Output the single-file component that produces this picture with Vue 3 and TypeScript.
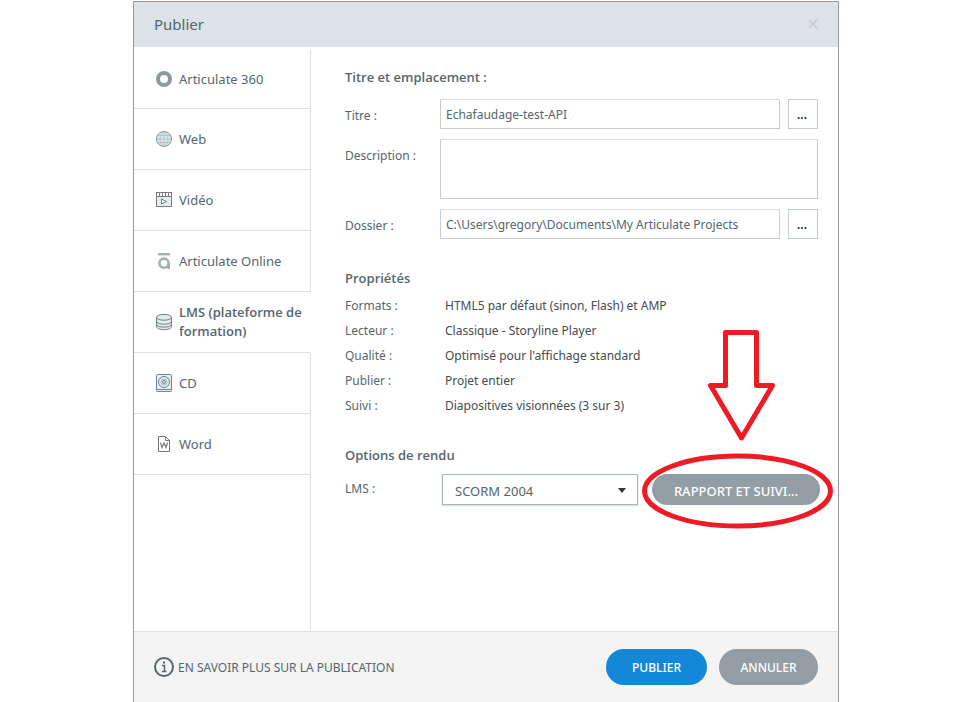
<script setup lang="ts">
import { ref } from 'vue'

interface Target {
  id: string
  label: string
}

interface Property {
  name: string
  value: string
}

const targets: Target[] = [
  { id: 'a360', label: 'Articulate 360' },
  { id: 'web', label: 'Web' },
  { id: 'video', label: 'Vidéo' },
  { id: 'online', label: 'Articulate Online' },
  { id: 'lms', label: 'LMS (plateforme de formation)' },
  { id: 'cd', label: 'CD' },
  { id: 'word', label: 'Word' },
]

const properties: Property[] = [
  { name: 'Formats :', value: 'HTML5 par défaut (sinon, Flash) et AMP' },
  { name: 'Lecteur :', value: 'Classique - Storyline Player' },
  { name: 'Qualité :', value: "Optimisé pour l'affichage standard" },
  { name: 'Publier :', value: 'Projet entier' },
  { name: 'Suivi :', value: 'Diapositives visionnées (3 sur 3)' },
]

const active = ref('lms')
const title = ref('Echafaudage-test-API')
const description = ref('')
const folder = ref('C:\\Users\\gregory\\Documents\\My Articulate Projects')
const lms = ref('SCORM 2004')
</script>

<template>
  <main class="page">
    <section class="dialog">
      <header class="head">
        <h1>Publier</h1>
        <button class="close" type="button" aria-label="Fermer">
          <svg width="10" height="10" viewBox="0 0 10 10"><path d="M1 1L9 9M9 1L1 9" stroke="#cfcfcf" stroke-width="2" /></svg>
        </button>
      </header>

      <div class="body">
        <nav class="nav">
          <button
            v-for="t in targets"
            :key="t.id"
            type="button"
            class="item"
            :class="{ active: active === t.id }"
            @click="active = t.id"
          >
            <svg class="icon" width="18" height="18" viewBox="0 0 18 18" fill="none">
              <circle v-if="t.id === 'a360'" cx="9" cy="9" r="6" stroke="#8d9a9c" stroke-width="4" />
              <g v-else-if="t.id === 'web'">
                <circle cx="9" cy="9" r="7.5" fill="#dfe8ec" stroke="#889396" />
                <path d="M9 2V16M2 9H16M3.5 5.5H14.5M3.5 12.5H14.5" stroke="#b3c3ca" />
                <ellipse cx="9" cy="9" rx="4" ry="7" stroke="#b3c3ca" />
              </g>
              <g v-else-if="t.id === 'video'">
                <rect x="1.5" y="1.5" width="15" height="14" fill="#e2ecef" stroke="#767c7e" />
                <rect x="2" y="2" width="14" height="3" fill="#fff" />
                <path d="M2 5.5H16M4.5 2V5M7.5 2V5M10.5 2V5M13.5 2V5" stroke="#767c7e" />
                <path d="M6.5 8V13L11.5 10.5Z" fill="#fff" stroke="#767c7e" />
              </g>
              <g v-else-if="t.id === 'online'" stroke="#9fb2b0">
                <path d="M3 2.2H15" stroke-width="2.4" />
                <circle cx="9" cy="11.2" r="4.6" stroke-width="2.6" />
                <path d="M13.7 11V17" stroke-width="2.6" />
              </g>
              <g v-else-if="t.id === 'lms'" stroke="#747e81">
                <path d="M1.5 4.5V13.5C1.5 15.5 5 16.7 9 16.7S16.5 15.5 16.5 13.5V4.5" fill="#e4ebed" />
                <ellipse cx="9" cy="4.3" rx="7.5" ry="2.9" fill="#e4ebed" />
                <path d="M1.5 8.2C1.5 10 5 11.2 9 11.2S16.5 10 16.5 8.2M1.5 11.2C1.5 13 5 14.1 9 14.1S16.5 13 16.5 11.2" />
              </g>
              <g v-else-if="t.id === 'cd'" stroke="#75858a">
                <rect x="1.5" y=".5" width="15" height="17" rx="1" fill="#e4edef" />
                <path d="M2 15.5H16" />
                <circle cx="9" cy="8" r="5.5" />
                <circle cx="9" cy="8" r="3" stroke="#a9b7bb" />
                <circle cx="9" cy="8" r="1.5" />
              </g>
              <g v-else stroke="#777">
                <path d="M3.5 1.5H10.5L14.5 5.5V16.5H3.5Z" fill="#fff" />
                <path d="M10.5 1.5V5.5H14.5" />
                <path d="M5.5 7.5L7 12.5L9 8L11 12.5L12.5 7.5" stroke-width="1.2" />
              </g>
            </svg>
            <span>{{ t.label }}</span>
          </button>
          <div class="rest"></div>
        </nav>

        <div class="content">
          <h2>Titre et emplacement :</h2>
          <div class="form">
            <label for="title">Titre :</label>
            <div class="line">
              <input id="title" v-model="title" type="text" />
              <button class="browse" type="button" aria-label="Parcourir le titre">...</button>
            </div>
            <label for="description">Description :</label>
            <textarea id="description" v-model="description"></textarea>
            <label for="folder">Dossier :</label>
            <div class="line">
              <input id="folder" v-model="folder" type="text" />
              <button class="browse" type="button" aria-label="Parcourir les dossiers">...</button>
            </div>
          </div>

          <h2 class="second">Propriétés</h2>
          <dl class="props">
            <template v-for="p in properties" :key="p.name">
              <dt>{{ p.name }}</dt>
              <dd>{{ p.value }}</dd>
            </template>
          </dl>

          <h2 class="third">Options de rendu</h2>
          <div class="output">
            <label for="lms">LMS :</label>
            <div class="select">
              <select id="lms" v-model="lms">
                <option>SCORM 2004</option>
                <option>SCORM 1.2</option>
                <option>AICC</option>
              </select>
              <svg class="caret" width="10" height="6" viewBox="0 0 10 6"><path d="M1 1H9L5 6Z" fill="#333" /></svg>
            </div>
            <div class="report">
              <button class="pill small" type="button">RAPPORT ET SUIVI...</button>
              <svg class="mark" width="196" height="204" viewBox="0 0 196 204" fill="none" stroke="#ed1c24" stroke-width="5" stroke-linejoin="round">
                <path d="M85.5 4.5H116.5V57.5H132.5L101.5 110L70.5 57.5H85.5Z" />
                <ellipse cx="97.5" cy="163" rx="93" ry="35" />
              </svg>
            </div>
          </div>
        </div>
      </div>

      <footer class="foot">
        <a class="more" href="#">
          <svg width="20" height="20" viewBox="0 0 20 20" fill="none" stroke="#55666d">
            <circle cx="10" cy="10" r="9" stroke-width="2" />
            <path d="M8 8.5H10.5V14M8 14.5H12.5" stroke-width="1.5" />
            <path d="M9 5.5H11" stroke-width="2" />
          </svg>
          <span>EN SAVOIR PLUS SUR LA PUBLICATION</span>
        </a>
        <button class="pill primary" type="button">PUBLIER</button>
        <button class="pill" type="button">ANNULER</button>
      </footer>
    </section>
  </main>
</template>

<style>
body {
  background: #fff;
}
</style>

<style scoped>
* {
  box-sizing: border-box;
}
.page {
  display: flex;
  min-height: 100vh;
  padding: 1px 121px 0 133px;
  font: 12px/16px "Noto Sans", "Open Sans", sans-serif;
  color: #55666d;
}
button,
input,
textarea,
select {
  font: inherit;
  color: inherit;
  margin: 0;
}
button {
  cursor: pointer;
}
.dialog {
  flex: 1;
  display: flex;
  flex-direction: column;
  border: 1px solid #999;
  border-bottom: 0;
  background: #fff;
}
.head {
  display: flex;
  align-items: center;
  justify-content: space-between;
  height: 45px;
  padding: 0 20px 2px;
  background: #dde2e6;
}
h1 {
  margin: 0;
  font-size: 15px;
  font-weight: 400;
}
.close {
  display: flex;
  padding: 0;
  border: 0;
  background: none;
}
.body {
  flex: 1;
  display: flex;
}
.nav {
  display: flex;
  flex-direction: column;
  width: 177px;
  padding-top: 3px;
}
.item {
  display: flex;
  align-items: center;
  gap: 6px;
  height: 61px;
  padding: 0 0 0 21px;
  border: solid #dde2e6;
  border-width: 0 1px 1px 0;
  background: #fff;
  font-size: 13px;
  line-height: 19px;
  text-align: left;
}
.item:first-child {
  height: 59px;
}
.item.active {
  border-right-color: transparent;
  font-family: "Open Sans", "Noto Sans", sans-serif;
  font-weight: 600;
}
.icon {
  flex: none;
}
.rest {
  flex: 1;
  border-right: 1px solid #dde2e6;
}
.content {
  flex: 1;
  padding: 20px 20px 0 34px;
}
h2 {
  margin: 0;
  font-family: "Open Sans", "Noto Sans", sans-serif;
  font-size: 13px;
  line-height: 20px;
  font-weight: 600;
}
.form {
  display: grid;
  grid-template-columns: 95px 1fr;
  row-gap: 10px;
  margin-top: 12px;
}
.form label {
  padding-top: 9px;
}
.line {
  display: flex;
  gap: 8px;
}
input,
textarea {
  min-width: 0;
  border: 1px solid #c5ced3;
  border-top-color: #d9dee1;
  border-radius: 0;
  background: #fff;
  padding: 0 5px;
  outline: 0;
}
input {
  flex: 1;
  height: 30px;
}
textarea {
  display: block;
  width: 100%;
  height: 60px;
  resize: none;
}
.browse {
  width: 30px;
  height: 30px;
  padding: 2px 2px 0 0;
  border: 1px solid #c5ced3;
  background: #fff;
  color: #222;
  font-weight: 600;
}
.second {
  margin-top: 29px;
}
.props {
  display: grid;
  grid-template-columns: 100px 1fr;
  margin: 5px 0 0;
  line-height: 25px;
}
dd {
  margin: 0;
  color: #444c50;
}
.third {
  margin-top: 27px;
}
.output {
  display: flex;
  align-items: flex-start;
  margin: 9px -2px 0 0;
}
.output label {
  width: 97px;
  padding-top: 7px;
}
.select {
  flex: 1;
  display: grid;
  align-items: center;
  margin-right: 14px;
}
.select > * {
  grid-area: 1 / 1;
}
select {
  appearance: none;
  width: 100%;
  height: 31px;
  padding: 2px 12px 0;
  border: 1px solid #a9b5bc;
  border-radius: 0;
  background: #fff;
  box-shadow: 0 1px 2px #d5dbdf;
  font-size: 13px;
}
.caret {
  justify-self: end;
  margin-right: 11px;
  pointer-events: none;
}
.report {
  position: relative;
}
.mark {
  position: absolute;
  left: -12px;
  top: -146px;
  pointer-events: none;
}
.pill {
  min-width: 99px;
  height: 36px;
  padding: 2px 16px 0;
  border: 0;
  border-radius: 18px;
  background: #929da5;
  color: #fff;
  font-weight: 500;
}
.pill.primary {
  min-width: 101px;
  background: #1487d8;
}
.pill.small {
  display: block;
  width: 168px;
  height: 31px;
  padding: 2px 0 0;
  font-size: 13px;
}
.foot {
  display: flex;
  align-items: center;
  gap: 12px;
  height: 71px;
  padding: 0 20px;
  border-top: 1px solid #dde2e6;
  background: #f4f4f4;
}
.more {
  flex: 1;
  display: flex;
  align-items: center;
  gap: 4px;
  color: inherit;
  text-decoration: none;
}
.more span {
  padding-top: 2px;
}
</style>
